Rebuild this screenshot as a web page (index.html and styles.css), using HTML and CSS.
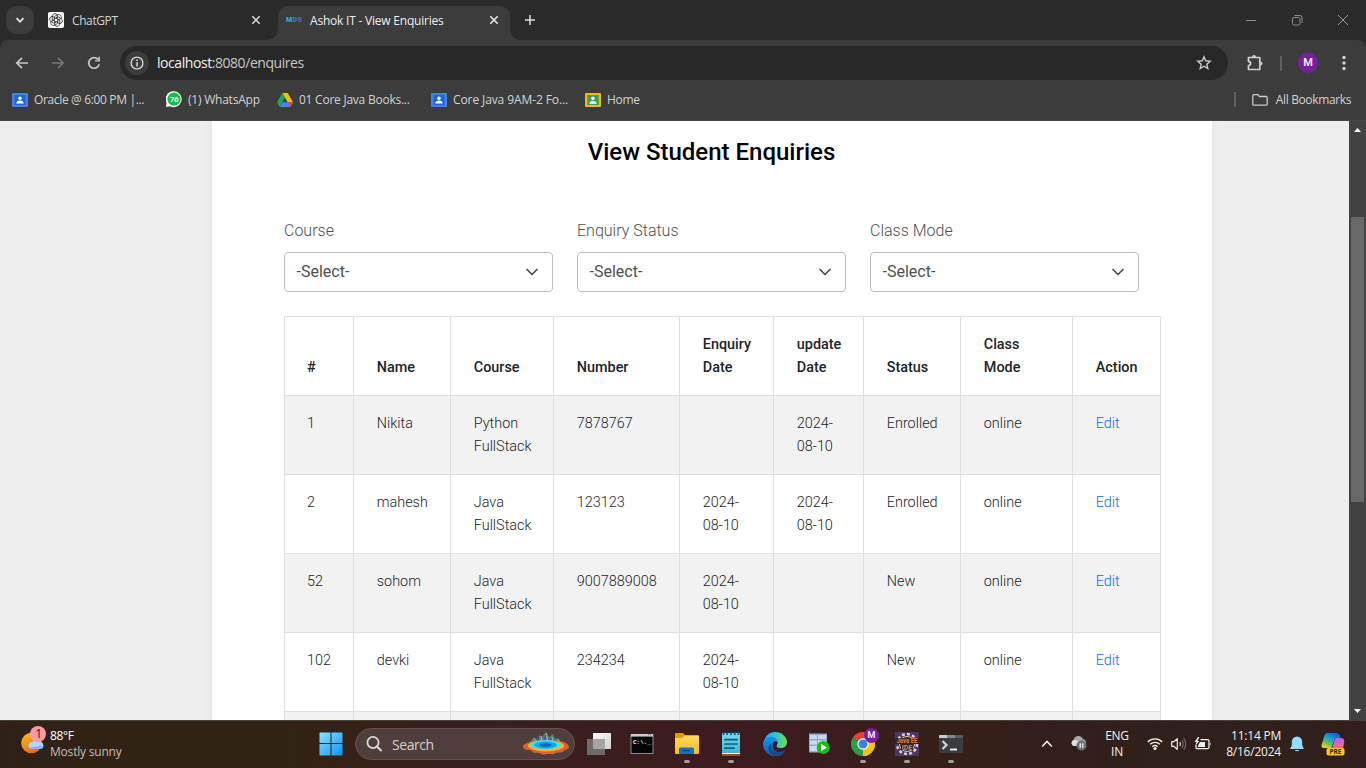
FILE: index.html
```html
<!DOCTYPE html>
<html lang="en">
<head>
<meta charset="utf-8">
<title>Ashok IT - View Enquiries</title>
<link rel="stylesheet" href="styles.css">
</head>
<body>
<div class="screen">
  <header class="tabstrip">
    <div class="tabsearch"><svg width="10" height="10" viewBox="0 0 10 10"><path d="M1.5 3.2 5 6.7 8.5 3.2" fill="none" stroke="#e3e3e3" stroke-width="1.8"/></svg></div>
    <div class="tab">
      <svg class="fav" width="16" height="16" viewBox="0 0 16 16"><rect width="16" height="16" rx="2" fill="#fff"/><g fill="none" stroke="#222" stroke-width=".75"><path id="petal" d="M6.300 9V4.600L9 3c2.500-1.400 5 1 4.200 3.400L9.700 8.400"/><use href="#petal" transform="rotate(60 8 8)"/><use href="#petal" transform="rotate(120 8 8)"/><use href="#petal" transform="rotate(180 8 8)"/><use href="#petal" transform="rotate(240 8 8)"/><use href="#petal" transform="rotate(300 8 8)"/></g></svg>
      <span class="t-chat">ChatGPT</span>
      <svg class="close" width="10" height="10" viewBox="0 0 10 10"><path d="m1.300 1.300 7.400 7.400M8.700 1.300 1.300 8.700" stroke="#ddd" stroke-width="1.500"/></svg>
    </div>
    <div class="tab active">
      <span class="mdb"><b>M</b><b>D</b><b>B</b></span>
      <span class="t-ashok">Ashok IT - View Enquiries</span>
      <svg class="close" width="10" height="10" viewBox="0 0 10 10"><path d="m1.300 1.300 7.400 7.400M8.700 1.300 1.300 8.700" stroke="#e6e6e6" stroke-width="1.600"/></svg>
    </div>
    <svg class="plus" width="12" height="12" viewBox="0 0 12 12"><path d="M6 1v10M1 6h10" stroke="#ddd" stroke-width="1.500"/></svg>
    <div class="winctl">
      <svg width="12" height="12" viewBox="0 0 12 12"><path d="M1 6.500h10" stroke="#8d8d8d"/></svg>
      <svg width="12" height="12" viewBox="0 0 12 12"><rect x="1.500" y="3.500" width="7.500" height="7.500" rx="1.500" fill="none" stroke="#8d8d8d"/><path d="M3.500 1.500H9a2 2 0 0 1 2 2V9" fill="none" stroke="#8d8d8d"/></svg>
      <svg width="12" height="12" viewBox="0 0 12 12"><path d="m1 1 10 10M11 1 1 11" stroke="#949494" stroke-width="1"/></svg>
    </div>
  </header>

  <div class="toolbar">
    <svg width="16" height="16" viewBox="0 0 16 16"><path d="M14 8H3M8 2.800 2.800 8 8 13.200" fill="none" stroke="#c9c9c9" stroke-width="1.700"/></svg>
    <svg width="16" height="16" viewBox="0 0 16 16"><path d="M2 8h11M8 2.800 13.200 8 8 13.200" fill="none" stroke="#777" stroke-width="1.700"/></svg>
    <svg width="16" height="16" viewBox="0 0 16 16"><path d="M13.200 9.200A5.300 5.300 0 1 1 12 4.400" fill="none" stroke="#c9c9c9" stroke-width="1.700"/><path d="M13.900 1.800v4.800H9.100V5.200h3.200V1.800z" fill="#c9c9c9"/></svg>
    <div class="omnibox">
      <span class="info"><svg width="14" height="14" viewBox="0 0 14 14"><circle cx="7" cy="7" r="5.900" fill="none" stroke="#d8d8d8" stroke-width="1.400"/><path d="M7 6.200v4.300M7 3.500v1.600" stroke="#d8d8d8" stroke-width="1.500"/></svg></span>
      <span class="url"><em>localhost</em>:8080/enquires</span>
      <svg class="star" width="16" height="16" viewBox="0 0 16 16"><path d="m8 1.800 1.700 4 4.500.400-3.400 3 1 4.300L8 11.200l-3.800 2.300 1-4.300-3.400-3 4.500-.400z" fill="none" stroke="#c9c9c9" stroke-width="1.400"/></svg>
    </div>
    <svg class="ext" width="18" height="18" viewBox="0 0 18 18"><path d="M2.500 3.500h11.300v12H2.500v-3.800c2.800-.5 2.800-3.800 0-4.300z" fill="none" stroke="#d0d0d0" stroke-width="1.700" stroke-linejoin="round"/><path d="M6 3a2 2 0 0 1 4 0zM14.500 7.500a2 2 0 0 1 0 4z" fill="#d0d0d0"/></svg>
    <i class="sep"></i>
    <span class="avatar">M</span>
    <svg class="kebab" width="4" height="16" viewBox="0 0 4 16"><g fill="#d0d0d0"><circle cx="2" cy="2.500" r="1.700"/><circle cx="2" cy="8" r="1.700"/><circle cx="2" cy="13.500" r="1.700"/></g></svg>
  </div>

  <div class="bookmarks">
    <a class="bm b1"><svg width="16" height="14" viewBox="0 0 16 14"><rect width="16" height="14" rx="1" fill="#3f82f0"/><rect x="2.500" y="2" width="11" height="10" fill="#1a67d2"/><circle cx="8" cy="5.200" r="1.700" fill="#fff"/><path d="M4.300 10.500c0-4 7.400-4 7.400 0z" fill="#fff"/></svg><span>Oracle @ 6:00 PM |...</span></a>
    <a class="bm b2"><svg width="16" height="17" viewBox="0 0 16 17"><path d="M0 16l.6-4A8 8 0 1 1 4 15.300z" fill="#fff"/><circle cx="8" cy="8.200" r="6.600" fill="#12c143"/><text x="8" y="11" text-anchor="middle" class="wa">76</text></svg><span>(1) WhatsApp</span></a>
    <a class="bm b3"><svg width="16" height="14" viewBox="0 0 16 14"><path d="M5.300 0h5.400L16 9.300h-5.400z" fill="#fbbc04"/><path d="M5.300 0 8 4.700 2.700 14 0 9.300z" fill="#1ca45c"/><path d="M5.400 9.300H16L13.300 14H2.700z" fill="#4285f4"/><path d="M10.600 9.300H16L13.300 14z" fill="#ea4335"/></svg><span>01 Core Java Books...</span></a>
    <a class="bm b4"><svg width="16" height="14" viewBox="0 0 16 14"><rect width="16" height="14" rx="1" fill="#3f82f0"/><rect x="2.500" y="2" width="11" height="10" fill="#1a67d2"/><circle cx="8" cy="5.200" r="1.700" fill="#fff"/><path d="M4.300 10.500c0-4 7.400-4 7.400 0z" fill="#fff"/></svg><span>Core Java 9AM-2 Fo...</span></a>
    <a class="bm b5"><svg width="16" height="14" viewBox="0 0 16 14"><rect width="16" height="14" rx="1" fill="#f5b912"/><rect x="2.200" y="2" width="11.600" height="10" fill="#3c9d5c"/><circle cx="8" cy="5.200" r="1.700" fill="#fff"/><path d="M4.300 11c0-4.500 7.400-4.500 7.400 0z" fill="#e3f0e6"/></svg><span>Home</span></a>
    <div class="allbm"><i class="sep"></i><svg width="16" height="12" viewBox="0 0 16 12"><path d="M.8 10.200V1.800Q.8.700 2 .700h3.800L7.500 2.500H14q1.200 0 1.200 1.200v6.500q0 1-1.200 1H2q-1.200 0-1.200-1z" fill="none" stroke="#c9c9c9" stroke-width="1.300"/></svg><span>All Bookmarks</span></div>
  </div>

  <div class="viewport">
    <main class="page">
      <section class="card">
        <h1>View Student Enquiries</h1>
        <div class="filters">
          <label>Course<span class="select">-Select-<svg width="16" height="16" viewBox="0 0 16 16"><path d="m3 5.500 5 5 5-5" fill="none" stroke="#4f4f4f" stroke-width="1.700" stroke-linecap="round" stroke-linejoin="round"/></svg></span></label>
          <label>Enquiry Status<span class="select">-Select-<svg width="16" height="16" viewBox="0 0 16 16"><path d="m3 5.500 5 5 5-5" fill="none" stroke="#4f4f4f" stroke-width="1.700" stroke-linecap="round" stroke-linejoin="round"/></svg></span></label>
          <label>Class Mode<span class="select">-Select-<svg width="16" height="16" viewBox="0 0 16 16"><path d="m3 5.500 5 5 5-5" fill="none" stroke="#4f4f4f" stroke-width="1.700" stroke-linecap="round" stroke-linejoin="round"/></svg></span></label>
        </div>
        <table>
          <colgroup><col class="c1"><col class="c2"><col class="c3"><col class="c4"><col class="c5"><col class="c6"><col class="c7"><col class="c8"><col class="c9"></colgroup>
          <thead><tr><th>#</th><th>Name</th><th>Course</th><th>Number</th><th>Enquiry<br>Date</th><th>update<br>Date</th><th>Status</th><th>Class<br>Mode</th><th>Action</th></tr></thead>
          <tbody>
            <tr><td>1</td><td>Nikita</td><td>Python<br>FullStack</td><td>7878767</td><td></td><td>2024-<br>08-10</td><td>Enrolled</td><td>online</td><td><a>Edit</a></td></tr>
            <tr><td>2</td><td>mahesh</td><td>Java<br>FullStack</td><td>123123</td><td>2024-<br>08-10</td><td>2024-<br>08-10</td><td>Enrolled</td><td>online</td><td><a>Edit</a></td></tr>
            <tr><td>52</td><td>sohom</td><td>Java<br>FullStack</td><td>9007889008</td><td>2024-<br>08-10</td><td></td><td>New</td><td>online</td><td><a>Edit</a></td></tr>
            <tr><td>102</td><td>devki</td><td>Java<br>FullStack</td><td>234234</td><td>2024-<br>08-10</td><td></td><td>New</td><td>online</td><td><a>Edit</a></td></tr>
            <tr><td></td><td></td><td></td><td></td><td></td><td></td><td></td><td></td><td></td></tr>
          </tbody>
        </table>
      </section>
    </main>
    <aside class="scrollbar">
      <svg width="7" height="4" viewBox="0 0 7 4"><path d="M0 4 3.500 0 7 4z" fill="#fff"/></svg>
      <i class="thumb"></i>
      <svg class="down" width="7" height="4" viewBox="0 0 7 4"><path d="M0 0h7L3.500 4z" fill="#fff"/></svg>
    </aside>
  </div>

  <footer class="taskbar">
    <div class="weather">
      <svg width="28" height="30" viewBox="0 0 28 30"><defs><linearGradient id="sun" x2=".6" y2="1"><stop stop-color="#f6bd2c"/><stop offset="1" stop-color="#ee6a12"/></linearGradient></defs><circle cx="10.500" cy="17" r="10.300" fill="url(#sun)"/><path d="M11 23a3.500 3.500 0 0 1 .3-7 4 4 0 0 1 7 0 3.500 3.500 0 0 1 1 7z" fill="#b9d3fa"/><path d="M8 21c5 1 9-2 14-1-.3 2-1.500 3-3 3h-8c-1.500 0-2.500-.5-3-2z" fill="#8db3ee"/><circle cx="17" cy="8" r="8" fill="#ff99a4"/><text x="17.500" y="12.300" text-anchor="middle" class="one">1</text></svg>
      <div><b>88°F</b><span>Mostly sunny</span></div>
    </div>
    <svg class="win" width="24" height="24" viewBox="0 0 24 24"><defs><linearGradient id="w" gradientUnits="userSpaceOnUse" x1="0" y1="0" x2="24" y2="24"><stop stop-color="#8be5ff"/><stop offset="1" stop-color="#0a91f5"/></linearGradient></defs><path d="M1 .5h10.500V11H.5V1zM12.500.500H23l.500.500v10h-11zM.5 12h11v11.500H1L.5 23zM12.500 12h11v11l-.5.500H12.500z" fill="url(#w)"/></svg>
    <div class="search">
      <svg width="18" height="18" viewBox="0 0 18 18"><circle cx="8" cy="7.500" r="5.600" fill="none" stroke="#d6dadd" stroke-width="1.800"/><path d="m12 11.500 4 4" stroke="#d6dadd" stroke-width="2" stroke-linecap="round"/></svg>
      <span>Search</span>
      <svg class="spring" width="48" height="26" viewBox="0 0 48 26"><path d="m8 11 4-5 2 3 4-5 2 2 4-5 3 5 4-3 2 5 3-1 4 6z" fill="#637782"/><path d="m12 7 3 4m4-6 1 6m4-9 2 9m4-5 1 5m5-3 2 4" stroke="#9cc0bd"/><path d="m17 6-2 5m9-7-2 7m7-4-2 4" stroke="#404c78"/><path d="M1 15c2-5 17-6 25-5 12-1 20 1 21 6 0 3-5 2-6 5-3 1-7 0-9 2-3 1-7-1-10 1-4-1-5-3-9-2-3 0-2-3-6-3-4 0-6-1-6-4z" fill="#df622b"/><ellipse cx="24" cy="14.800" rx="18" ry="5.600" fill="#ffad2f"/><ellipse cx="23.500" cy="14" rx="15.500" ry="4.700" fill="#3ee6dc"/><ellipse cx="23.500" cy="14" rx="11.500" ry="3.500" fill="#13a7ef"/><ellipse cx="23.500" cy="14" rx="6" ry="1.700" fill="#1262cf"/></svg>
    </div>
    <nav class="apps">
      <span><svg width="24" height="24" viewBox="0 0 24 24"><defs><linearGradient id="tv" x2="1" y2="1"><stop stop-color="#fff"/><stop offset="1" stop-color="#cfcfcf"/></linearGradient></defs><rect x="6" y="1" width="18" height="16" rx=".6" fill="url(#tv)"/><path d="M0 7h18v16H0z" fill="#6f6b6b"/><path d="M6 7h12v10H6z" fill="#a7a4a4"/></svg></span>
      <span class="console"><svg width="24" height="24" viewBox="0 0 24 24"><rect x="1" y="2.500" width="22" height="19" fill="#050505" stroke="#838b90"/><path d="M1 2h22v2.600H1z" fill="#c5cbd1"/><path d="M18 2.800h1m1 0h1" stroke="#496176"/><text x="3" y="11.500" class="cmd">C:\._</text></svg></span>
      <span class="run"><svg width="24" height="24" viewBox="0 0 24 24"><defs><linearGradient id="fo" x2="0" y2="1"><stop stop-color="#ffda60"/><stop offset="1" stop-color="#fcb91c"/></linearGradient></defs><path d="M0 2q0-1 1-1h7l3 3v5H0z" fill="#dd9b08"/><path d="M0 6h7l3-2.700h13q1 0 1 1V21q0 1-1 1H1q-1 0-1-1z" fill="url(#fo)"/><path d="M4 22v-5q0-1.500 1.500-1.500h12Q19 15.500 19 17v5z" fill="#1474ba"/><path d="M8 18h7v1.200H8z" fill="#083b70"/></svg></span>
      <span class="run"><svg width="24" height="24" viewBox="0 0 24 24"><defs><linearGradient id="np" x2="0" y2="1"><stop stop-color="#7bd6ec"/><stop offset="1" stop-color="#3bb5d7"/></linearGradient></defs><path d="M3 1h18v20H3z" fill="url(#np)"/><path d="M3 21h18v1H3z" fill="#fff"/><path d="M3 22h18v2H3z" fill="#a84d11"/><path d="M4.500 0v3m3.700-3v3M12 0v3m3.700-3v3m3.700-3v3" stroke="#075b7c" stroke-width="1.600"/><path d="M6 7.700h12M6 12h12M6 16.200h9" stroke="#07617f" stroke-width="1.700" stroke-linecap="round"/></svg></span>
      <span><svg width="24" height="24" viewBox="0 0 24 24"><defs><linearGradient id="e1" x1="0" x2="1"><stop stop-color="#28a8e8"/><stop offset=".5" stop-color="#2cc7cd"/><stop offset="1" stop-color="#72df49"/></linearGradient><linearGradient id="e2" x2="0" y2="1"><stop stop-color="#1198e8"/><stop offset="1" stop-color="#0961b9"/></linearGradient></defs><path d="M1 9C3 3 7 0 12 0c7 0 12 5 12 10 0 4-3 6-6 6-4 0-5-1.500-4-3 2-4-1-7-5-7-3 0-6 1-8 3z" fill="url(#e1)"/><path d="M0 12c0-5 5-8 9-7 4 0 6 3 5 5-1-1-3-1-4 1-2 7 4 11 11 9-2 3-5 4-9 4C5 24 0 18 0 12z" fill="url(#e2)"/><path d="M9 11c-3 7 5 12 13 7 .6 0 .8.500.300 1C20 22 16 24 12 24c-8-2-9-10-3-13z" fill="#154b91"/></svg></span>
      <span><svg width="24" height="24" viewBox="0 0 24 24"><rect x="2" y="1.500" width="18" height="19" fill="#8fabd2"/><path d="M3 3h7v4H3zm8 0h8v4h-8zM3 8.500h7v4H3zm8 0h8v4h-8zM3 14h7v5H3zm8 0h8v5h-8z" fill="#c8daef"/><circle cx="16.300" cy="15.500" r="6.500" fill="#18bd0d"/><path d="m14 11.800 6 3.700-6 3.700z" fill="#fff"/></svg></span>
      <span class="run chrome"><svg width="24" height="24" viewBox="0 0 24 24"><path d="M12 12 1.600 6A12 12 0 0 1 22.400 6z" fill="#e84336"/><path d="M12 12 22.400 6A12 12 0 0 1 12 24z" fill="#fbc116"/><path d="M12 12v12A12 12 0 0 1 1.600 6z" fill="#2b9e4a"/><path d="M12 6.500h10.700q1.300 2.500 1.300 5.500A12 12 0 0 1 12 24l5-9z" fill="#fbc116"/><circle cx="12" cy="12" r="5.700" fill="#fff"/><circle cx="12" cy="12" r="4.500" fill="#397ee9"/></svg><i class="badge">M</i></span>
      <span class="run"><svg width="24" height="24" viewBox="0 0 24 24"><rect width="24" height="24" fill="#4a3569"/><circle cx="12" cy="12" r="10" fill="none" stroke="#d4d1d1" stroke-width="2.500" stroke-dasharray="3 2.200"/><circle cx="12" cy="12" r="7.500" fill="#292329" stroke="#ccc"/><path d="M0 6h24v6H0zM6 12h12v6H6z" fill="#302630"/><text x="12" y="11.300" text-anchor="middle" textLength="21" lengthAdjust="spacingAndGlyphs" class="ee">Java EE</text><text x="12" y="17.500" text-anchor="middle" class="ee">IDE</text></svg></span>
      <span class="run"><svg width="24" height="24" viewBox="0 0 24 24"><rect y="3" width="24" height="18" rx="1" fill="#393d40"/><path d="M0 6V4q0-1 1-1h7v3z" fill="#ccc"/><path d="M8 3h8v3H8z" fill="#888"/><path d="M16 3h7q1 0 1 1v2h-8z" fill="#5c5c5c"/><path d="m3.500 9 4 4-4 4" fill="none" stroke="#d4d4d4" stroke-width="2.200"/><path d="M11 17.500h7" stroke="#fff" stroke-width="1.800"/></svg></span>
    </nav>
    <div class="tray">
      <svg class="chev" width="12" height="8" viewBox="0 0 12 8"><path d="m1.200 6.500 4.800-5 4.800 5" fill="none" stroke="#eee" stroke-width="1.600"/></svg>
      <svg class="cloud" width="18" height="16" viewBox="0 0 18 16"><path d="M3.500 10a3.300 3.300 0 0 1 0-6A5 5 0 0 1 13 3a3.700 3.700 0 0 1 1 7z" fill="#a7a7a7"/><path d="M3.500 10a3.300 3.300 0 0 1 0-6q3-.500 6 2l-1 4z" fill="#dedede"/><circle cx="11.500" cy="9.500" r="5" fill="#667079"/><path d="M10.200 7.300v4.400m2.600-4.400v4.400" stroke="#fff" stroke-width="1.200"/></svg>
      <div class="lang"><span>ENG</span><span>IN</span></div>
      <svg class="wifi" width="16" height="14" viewBox="0 0 16 14"><path d="M.8 5a10 10 0 0 1 14.400 0M3.100 7.300a7 7 0 0 1 9.800 0M5.300 9.700a4 4 0 0 1 5.400 0" fill="none" stroke="#eee" stroke-width="1.300"/><circle cx="8" cy="11.500" r="1.600" fill="#eee"/></svg>
      <svg class="vol" width="16" height="14" viewBox="0 0 16 14"><path d="M.7 4.700h2L6.300 1.700v10.600L2.700 9.300h-2z" fill="none" stroke="#eee" stroke-width="1.200" stroke-linejoin="round"/><path d="M8.800 5q1.500 2 0 4" fill="none" stroke="#eee" stroke-width="1.100"/><path d="M10.800 3q3 4 0 8M12.700 1.300q4 5.700 0 11.400" fill="none" stroke="#776c69" stroke-width="1.100"/></svg>
      <svg class="bat" width="18" height="14" viewBox="0 0 18 14"><path d="M6.500 2.700h7q1.500 0 1.500 1.500v6q0 1.500-1.500 1.500h-10Q2 11.700 2 10.200V8" fill="none" stroke="#eee" stroke-width="1.300"/><path d="M16 5.500q1.500 1.500 0 3z" fill="#eee"/><path d="M6 5h5v5H4V8.500z" fill="#eee"/><path d="M4 0 .5 5h2L1.300 9l4-5H3.400l2-4z" fill="#eee"/></svg>
      <div class="clock"><span>11:14 PM</span><span>8/16/2024</span></div>
      <svg class="bell" width="14" height="16" viewBox="0 0 14 16"><path d="M7 .5a5.200 5.200 0 0 1 5.200 5.200v3.800l1.400 2.500v1H.4v-1l1.400-2.500V5.700A5.200 5.200 0 0 1 7 .5zM4.500 14h5q-2.500 2.500-5 0z" fill="#91dcf9"/></svg>
      <svg class="copilot" width="24" height="24" viewBox="0 0 24 24"><defs><linearGradient id="cp" x1=".8" x2=".2" y2="1"><stop stop-color="#1553d8"/><stop offset=".45" stop-color="#20a4d0"/><stop offset=".7" stop-color="#5ebe62"/><stop offset="1" stop-color="#efd32b"/></linearGradient><linearGradient id="cq" x2=".2" y2="1"><stop stop-color="#a867ef"/><stop offset="1" stop-color="#f06797"/></linearGradient></defs><path d="M6 1h10q2 0 3 3l.5 2H16q-2 0-3 3l-2.500 7H3q-3 0-2.400-3l2.700-9Q4.200 1 6 1z" fill="url(#cp)"/><path d="M16 6h4q3.500 0 3.200 4L22 17H11l2-7q1-4 3-4z" fill="url(#cq)"/><rect x="5.500" y="16" width="18" height="7.500" rx="2" fill="#ffc61a"/><text x="14.500" y="22.200" text-anchor="middle" class="pre">PRE</text></svg>
    </div>
  </footer>
</div>
</body>
</html>
```
FILE: styles.css
```css
* { box-sizing: border-box; }
body { margin: 0; overflow: hidden; font-family: "Open Sans", "Noto Sans", sans-serif; }
svg { display: block; flex: none; }
.screen { width: 1366px; height: 768px; display: grid; grid-template-rows: 40px 46px 35px 599px 48px; background: #2b2b2b; }

.tabstrip { display: flex; align-items: center; background: #2b2b2b; padding-left: 6px; font-size: 12px; color: #d3d3d3; }
.tabsearch { width: 28px; height: 28px; border-radius: 10px; background: #3c3c3c; display: grid; place-items: center; }
.tab { width: 244px; height: 34px; margin-top: 6px; padding: 0 17px 6px 14px; display: flex; align-items: center; gap: 8px; white-space: nowrap; }
.tab .close { margin-left: auto; }
.tab.active { width: 232px; background: #3c3c3c; border-radius: 10px 10px 0 0; position: relative; padding: 0 11px 6px 8px; color: #eee; }
.tab.active::before, .tab.active::after { content: ""; position: absolute; bottom: 0; width: 10px; height: 10px; }
.tab.active::before { left: -10px; background: radial-gradient(circle at 0 0, #2b2b2b 9.5px, #3c3c3c 10px); }
.tab.active::after { right: -10px; background: radial-gradient(circle at 100% 0, #2b2b2b 9.5px, #3c3c3c 10px); }
.t-chat { letter-spacing: -.4px; }
.t-ashok { letter-spacing: -.21px; }
.mdb { width: 16px; display: flex; font: 700 7px Roboto, sans-serif; color: #38a8df; justify-content: space-between; }
.mdb b:nth-child(2) { color: #3f78e0; }
.mdb b:nth-child(3) { color: #6650bd; }
.plus { margin-left: 14px; }
.winctl { margin-left: auto; margin-right: 17px; display: flex; gap: 34px; }

.toolbar { background: #3c3c3c; border-radius: 8px 8px 0 0; display: flex; align-items: center; padding-left: 14px; gap: 20px; }
.omnibox { width: 1108px; height: 34px; margin-left: -2px; border-radius: 17px; background: #282828; display: flex; align-items: center; padding: 0 16px 0 5px; }
.info { width: 24px; height: 24px; border-radius: 50%; background: #3c3c3c; display: grid; place-items: center; }
.url { margin-left: 8px; padding-bottom: 1px; font-size: 14px; letter-spacing: -.44px; color: #c7c7c7; }
.url em { font-style: normal; color: #f1f1f1; }
.star { margin-left: auto; }
.ext { margin-left: -2px; }
.sep { width: 2px; height: 15px; background: #5f5f5f; flex: none; }
.toolbar .sep { margin-left: -4px; }
.avatar { width: 20px; height: 20px; margin-left: -4px; border-radius: 50%; background: #7b1fa2; color: #fff; font: 500 11px/20px Roboto, sans-serif; text-align: center; }
.kebab { margin-left: 4px; }

.bookmarks { background: #3c3c3c; border-bottom: 1px solid #494747; padding: 0 15px 7px 12px; display: flex; align-items: center; font-size: 12px; color: #d3d3d3; white-space: nowrap; }
.bm { display: flex; align-items: center; gap: 6px; letter-spacing: -.3px; }
.b1 { width: 154px; letter-spacing: -.35px; } .b2 { width: 111px; letter-spacing: -.22px; } .b3 { width: 154px; letter-spacing: -.24px; } .b4 { width: 154px; letter-spacing: -.1px; }
.wa { font: 700 8px Roboto, sans-serif; fill: #fff; }
.allbm { margin-left: auto; display: flex; align-items: center; letter-spacing: -.37px; }
.allbm svg { margin: 0 8px 0 16px; }

.viewport { display: grid; grid-template-columns: 1fr 17px; overflow: hidden; background: #eee; }
.page { padding-left: 212px; overflow: hidden; }
.card { width: 1000px; height: 599px; background: #fff; padding: 14px 72px 0; box-shadow: 0 0 12px rgba(0,0,0,.06); font-family: Roboto, sans-serif; }
h1 { margin: 0 0 0 -1px; font-size: 24px; line-height: 34px; font-weight: 500; color: #000; text-align: center; }
.filters { display: grid; grid-template-columns: 269px 269px 269px; gap: 24px; margin-top: 49px; }
label { display: block; font-size: 16px; line-height: 26px; font-weight: 300; color: #4f4f4f; }
.select { height: 40px; margin-top: 8px; border: 1px solid #bdbdbd; border-radius: 4px; padding: 0 12px 0 11.500px; display: flex; align-items: center; justify-content: space-between; font-weight: 400; color: #4f4f4f; }
table { width: 877px; margin-top: 24px; table-layout: fixed; border-collapse: separate; border-spacing: 0; border-left: 1px solid #e0e0e0; border-top: 1px solid #e0e0e0; font-size: 14.400px; line-height: 23px; color: #212529; }
.c1 { width: 69px; } .c2 { width: 97px; } .c3 { width: 103px; } .c4 { width: 126px; } .c5 { width: 94px; } .c6 { width: 90px; } .c7 { width: 97px; } .c8 { width: 112px; } .c9 { width: 88px; }
th, td { height: 79px; padding: 16px 0 16px 22.800px; text-align: left; border-right: 1px solid #e0e0e0; border-bottom: 1px solid #e0e0e0; }
th:first-child, td:first-child { padding-left: 22px; }
th { font-weight: 500; vertical-align: bottom; }
td { font-weight: 300; vertical-align: top; }
tbody tr:nth-child(odd) td { background: #f2f2f2; }
td a { color: #0d6efd; }

.scrollbar { background: #424242; display: flex; flex-direction: column; align-items: center; padding: 7px 0; }
.thumb { width: 13px; height: 285px; margin-top: 85px; background: #686868; }
.down { margin-top: auto; }

.taskbar { border-top: 1px solid #454038; padding-bottom: 1px; background: linear-gradient(90deg, #302019 0, #302315 90px, #302315 280px, #372017 370px, #392020 470px, #3b1d1d 640px, #3d1b1f 760px, #361f19 930px, #31201a 1100px, #30211a 1290px, #331f1b 1366px); display: flex; align-items: center; font-size: 12px; }
.weather { width: 318px; padding: 0 0 3px 21px; display: flex; gap: 1px; color: #c4bdb8; letter-spacing: -.2px; line-height: 16px; }
.weather b, .weather div span { display: block; }
.weather b { font-weight: 500; color: #fff; letter-spacing: -.4px; }
.weather div { padding-top: 2px; }
.win { margin-left: .5px; }
.one { font: 12px "Open Sans", sans-serif; fill: #241c1d; }
.search { width: 220px; height: 32px; margin-left: 12.500px; border: 1px solid #62514e; border-radius: 16px; background: #503e3c; display: flex; align-items: center; padding: 0 4px 0 9px; gap: 9px; color: #d6d0cf; font-size: 14px; letter-spacing: -.45px; }
.spring { margin-left: auto; }
.cmd { font: 700 6px "Liberation Mono", monospace; fill: #eee; }
.apps { margin-left: 2px; display: flex; height: 46px; }
.apps > span { width: 44px; display: grid; place-items: center; position: relative; }
.apps > .console { padding-right: 2px; }
.run::after { content: ""; position: absolute; left: 19px; bottom: 4px; width: 6px; height: 3px; border-radius: 2px; background: #a39c9b; }
.badge { position: absolute; left: 23px; top: 7px; width: 15px; height: 15px; border-radius: 50%; background: #7b1fa2; color: #fff; font: 500 9px/15px Roboto, sans-serif; text-align: center; }
.ee { font: 700 7px Roboto, sans-serif; fill: #f47b20; }
.tray { margin-left: 68px; display: flex; align-items: center; color: #f2f0ef; line-height: 16px; }
.cloud { margin-left: 17px; }
.lang { width: 26px; margin-left: 16px; text-align: center; }
.lang span, .clock span { display: block; }
.lang { letter-spacing: -.3px; }
.wifi { margin-left: 17px; }
.vol { margin-left: 8px; }
.bat { margin-left: 7px; }
.clock { width: 60px; margin-left: 9px; text-align: right; letter-spacing: -.22px; white-space: nowrap; }
.bell { margin-left: 9px; }
.copilot { margin-left: 17px; }
.pre { font: 700 6.500px "Open Sans", sans-serif; fill: #271c00; }
```
